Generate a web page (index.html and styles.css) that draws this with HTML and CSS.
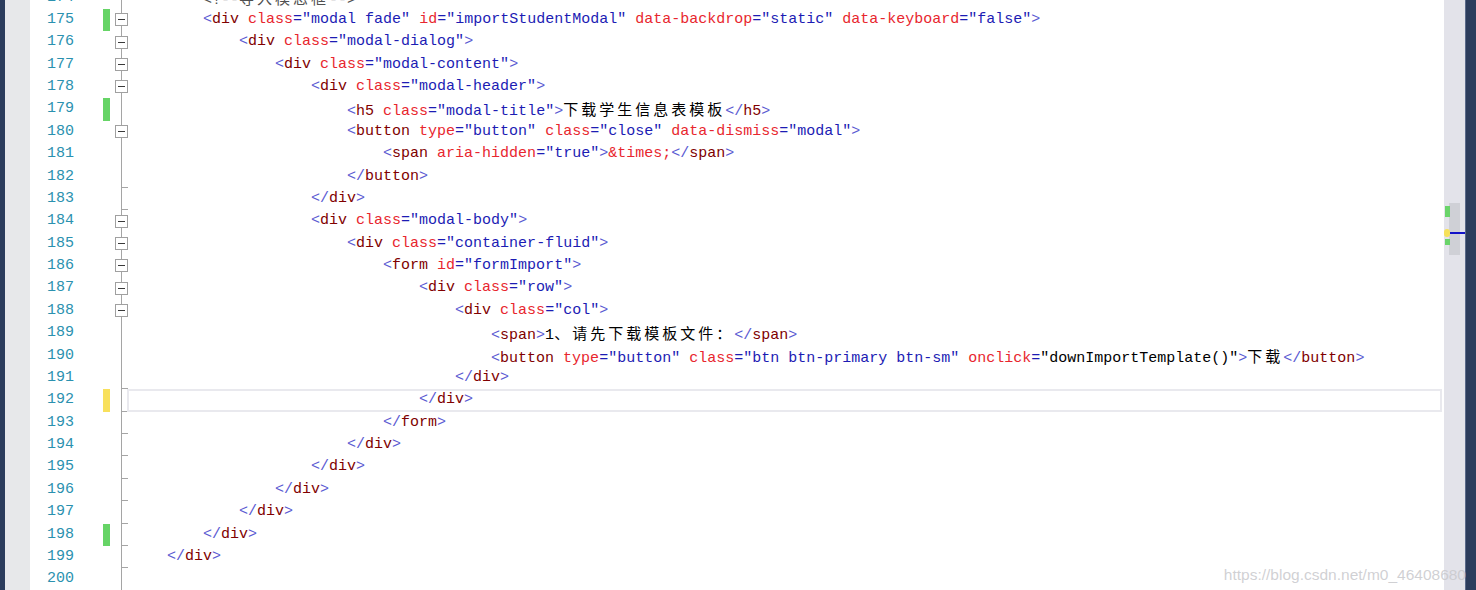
FILE: index.html
```html
<!DOCTYPE html>
<html>
<head>
<meta charset="utf-8">
<link rel="stylesheet" href="styles.css">
</head>
<body>
<div class="window">
  <div class="edge-l"></div>
  <div class="margin"></div>
  <div class="editor">
    <div class="lines">
      <div class="ln"><span class="num">174</span><span class="chg"></span><span class="fold"></span><span class="code">        <span class="c">&lt;!--<span class="k">导入模态框</span>--&gt;</span></span></div>
      <div class="ln"><span class="num">175</span><span class="chg g"></span><span class="fold open"></span><span class="code">        <span class="d">&lt;</span><span class="t">div</span> <span class="a">class</span><span class="v">="modal fade"</span> <span class="a">id</span><span class="v">="importStudentModal"</span> <span class="a">data-backdrop</span><span class="v">="static"</span> <span class="a">data-keyboard</span><span class="v">="false"</span><span class="d">&gt;</span></span></div>
      <div class="ln"><span class="num">176</span><span class="chg"></span><span class="fold open"></span><span class="code">            <span class="d">&lt;</span><span class="t">div</span> <span class="a">class</span><span class="v">="modal-dialog"</span><span class="d">&gt;</span></span></div>
      <div class="ln"><span class="num">177</span><span class="chg"></span><span class="fold open"></span><span class="code">                <span class="d">&lt;</span><span class="t">div</span> <span class="a">class</span><span class="v">="modal-content"</span><span class="d">&gt;</span></span></div>
      <div class="ln"><span class="num">178</span><span class="chg"></span><span class="fold open"></span><span class="code">                    <span class="d">&lt;</span><span class="t">div</span> <span class="a">class</span><span class="v">="modal-header"</span><span class="d">&gt;</span></span></div>
      <div class="ln"><span class="num">179</span><span class="chg g"></span><span class="fold"></span><span class="code">                        <span class="d">&lt;</span><span class="t">h5</span> <span class="a">class</span><span class="v">="modal-title"</span><span class="d">&gt;</span><span class="k">下载学生信息表模板</span><span class="d">&lt;/</span><span class="t">h5</span><span class="d">&gt;</span></span></div>
      <div class="ln"><span class="num">180</span><span class="chg"></span><span class="fold open"></span><span class="code">                        <span class="d">&lt;</span><span class="t">button</span> <span class="a">type</span><span class="v">="button"</span> <span class="a">class</span><span class="v">="close"</span> <span class="a">data-dismiss</span><span class="v">="modal"</span><span class="d">&gt;</span></span></div>
      <div class="ln"><span class="num">181</span><span class="chg"></span><span class="fold"></span><span class="code">                            <span class="d">&lt;</span><span class="t">span</span> <span class="a">aria-hidden</span><span class="v">="true"</span><span class="d">&gt;</span><span class="a">&amp;times;</span><span class="d">&lt;/</span><span class="t">span</span><span class="d">&gt;</span></span></div>
      <div class="ln"><span class="num">182</span><span class="chg"></span><span class="fold end"></span><span class="code">                        <span class="d">&lt;/</span><span class="t">button</span><span class="d">&gt;</span></span></div>
      <div class="ln"><span class="num">183</span><span class="chg"></span><span class="fold end"></span><span class="code">                    <span class="d">&lt;/</span><span class="t">div</span><span class="d">&gt;</span></span></div>
      <div class="ln"><span class="num">184</span><span class="chg"></span><span class="fold open"></span><span class="code">                    <span class="d">&lt;</span><span class="t">div</span> <span class="a">class</span><span class="v">="modal-body"</span><span class="d">&gt;</span></span></div>
      <div class="ln"><span class="num">185</span><span class="chg"></span><span class="fold open"></span><span class="code">                        <span class="d">&lt;</span><span class="t">div</span> <span class="a">class</span><span class="v">="container-fluid"</span><span class="d">&gt;</span></span></div>
      <div class="ln"><span class="num">186</span><span class="chg"></span><span class="fold open"></span><span class="code">                            <span class="d">&lt;</span><span class="t">form</span> <span class="a">id</span><span class="v">="formImport"</span><span class="d">&gt;</span></span></div>
      <div class="ln"><span class="num">187</span><span class="chg"></span><span class="fold open"></span><span class="code">                                <span class="d">&lt;</span><span class="t">div</span> <span class="a">class</span><span class="v">="row"</span><span class="d">&gt;</span></span></div>
      <div class="ln"><span class="num">188</span><span class="chg"></span><span class="fold open"></span><span class="code">                                    <span class="d">&lt;</span><span class="t">div</span> <span class="a">class</span><span class="v">="col"</span><span class="d">&gt;</span></span></div>
      <div class="ln"><span class="num">189</span><span class="chg"></span><span class="fold"></span><span class="code">                                        <span class="d">&lt;</span><span class="t">span</span><span class="d">&gt;</span>1<span class="k">、请先下载模板文件：</span><span class="d">&lt;/</span><span class="t">span</span><span class="d">&gt;</span></span></div>
      <div class="ln"><span class="num">190</span><span class="chg"></span><span class="fold"></span><span class="code">                                        <span class="d">&lt;</span><span class="t">button</span> <span class="a">type</span><span class="v">="button"</span> <span class="a">class</span><span class="v">="btn btn-primary btn-sm"</span> <span class="a">onclick</span><span class="v">=</span>"downImportTemplate()"<span class="d">&gt;</span><span class="k">下载</span><span class="d">&lt;/</span><span class="t">button</span><span class="d">&gt;</span></span></div>
      <div class="ln"><span class="num">191</span><span class="chg"></span><span class="fold end"></span><span class="code">                                    <span class="d">&lt;/</span><span class="t">div</span><span class="d">&gt;</span></span></div>
      <div class="ln cur"><span class="num">192</span><span class="chg y"></span><span class="fold end"></span><span class="code">                                <span class="d">&lt;/</span><span class="t">div</span><span class="d">&gt;</span></span></div>
      <div class="ln"><span class="num">193</span><span class="chg"></span><span class="fold end"></span><span class="code">                            <span class="d">&lt;/</span><span class="t">form</span><span class="d">&gt;</span></span></div>
      <div class="ln"><span class="num">194</span><span class="chg"></span><span class="fold end"></span><span class="code">                        <span class="d">&lt;/</span><span class="t">div</span><span class="d">&gt;</span></span></div>
      <div class="ln"><span class="num">195</span><span class="chg"></span><span class="fold end"></span><span class="code">                    <span class="d">&lt;/</span><span class="t">div</span><span class="d">&gt;</span></span></div>
      <div class="ln"><span class="num">196</span><span class="chg"></span><span class="fold end"></span><span class="code">                <span class="d">&lt;/</span><span class="t">div</span><span class="d">&gt;</span></span></div>
      <div class="ln"><span class="num">197</span><span class="chg"></span><span class="fold end"></span><span class="code">            <span class="d">&lt;/</span><span class="t">div</span><span class="d">&gt;</span></span></div>
      <div class="ln"><span class="num">198</span><span class="chg g"></span><span class="fold end"></span><span class="code">        <span class="d">&lt;/</span><span class="t">div</span><span class="d">&gt;</span></span></div>
      <div class="ln"><span class="num">199</span><span class="chg"></span><span class="fold end"></span><span class="code">    <span class="d">&lt;/</span><span class="t">div</span><span class="d">&gt;</span></span></div>
      <div class="ln"><span class="num">200</span><span class="chg"></span><span class="fold"></span><span class="code"></span></div>
      <div class="ln"><span class="num">201</span><span class="chg"></span><span class="fold"></span><span class="code"></span></div>
    </div>
  </div>
  <div class="vscroll">
    <div class="thumb"></div>
    <div class="mk mk-g1"></div>
    <div class="mk mk-line"></div>
    <div class="mk mk-y"></div>
    <div class="mk mk-g2"></div>
  </div>
  <div class="edge-r"></div>
</div>
<div class="watermark">https://blog.csdn.net/m0_46408680</div>
</body>
</html>
```
FILE: styles.css
```css
html, body {
  margin: 0;
  height: 100%;
  overflow: hidden;
  background: #fff;
}
body {
  position: relative;
  font-family: "Liberation Mono", "Noto Sans CJK SC", monospace;
  font-size: 15px;
}
.window {
  display: flex;
  height: 590px;
}
.edge-l {
  width: 5px;
  background: #2b3c5c;
}
.margin {
  width: 25px;
  background: #e7e8ea;
}
.editor {
  flex: 1;
  min-width: 0;
  overflow: hidden;
  background: #fff;
}
.lines {
  margin-top: -13.4px;
}
.ln {
  position: relative;
  display: grid;
  grid-template-columns: 73px 7px 21px minmax(0, 1fr);
  height: 22.375px;
  line-height: 22.375px;
}
.num {
  padding-right: 29px;
  text-align: right;
  color: #2b91af;
}
.chg.g { background: #66d466; }
.chg.y { background: #f8e05c; }
.fold {
  position: relative;
  background: linear-gradient(#a5a5a5, #a5a5a5) no-repeat 11px 0 / 1px 100%;
}
.fold.open::before {
  content: "";
  position: absolute;
  left: 5px;
  top: 50%;
  margin-top: -7px;
  width: 13px;
  height: 13px;
  box-sizing: border-box;
  border: 1px solid #a0a0a0;
  background: #fff linear-gradient(#3a3a3a, #3a3a3a) no-repeat center / 7px 1px;
}
.fold.end::after {
  content: "";
  position: absolute;
  left: 11px;
  bottom: 0;
  width: 7px;
  height: 1px;
  background: #a5a5a5;
}
.code {
  white-space: pre;
  color: #000;
  overflow: hidden;
}
.d { color: #5a5ad2; }
.t { color: #800000; }
.a { color: #e8262e; }
.v { color: #1c1cb4; }
.c { color: #505050; }
.k {
  font-family: "Noto Sans CJK SC", sans-serif;
  letter-spacing: 3px;
}
.cur::after {
  content: "";
  position: absolute;
  left: 97px;
  right: 2px;
  top: 0;
  bottom: 0;
  border: 2px solid #e9e9ee;
  pointer-events: none;
}
.vscroll {
  position: relative;
  width: 21px;
  background: #e3e3ea;
}
.thumb {
  position: absolute;
  left: 5px;
  top: 203px;
  width: 11px;
  height: 52px;
  background: #cfd0d6;
}
.mk { position: absolute; }
.mk-g1 {
  left: 1px;
  top: 206px;
  width: 5px;
  height: 11px;
  background: #6ad46a;
}
.mk-g2 {
  left: 1px;
  top: 239px;
  width: 5px;
  height: 6px;
  background: #6ad46a;
}
.mk-line {
  left: 2px;
  right: 0;
  top: 232px;
  height: 2px;
  background: #1212c8;
}
.mk-y {
  left: 0;
  top: 229px;
  width: 6px;
  height: 8px;
  border-radius: 3px;
  background: #f6e15a;
}
.edge-r {
  width: 11px;
  background: #2c3d5d;
  border-left: 1px solid #5a6a8a;
  box-sizing: border-box;
}
.watermark {
  position: absolute;
  right: 10px;
  bottom: 6px;
  font-family: "Liberation Sans", Arial, sans-serif;
  font-size: 15.5px;
  color: rgba(200, 200, 204, 0.85);
}
```
